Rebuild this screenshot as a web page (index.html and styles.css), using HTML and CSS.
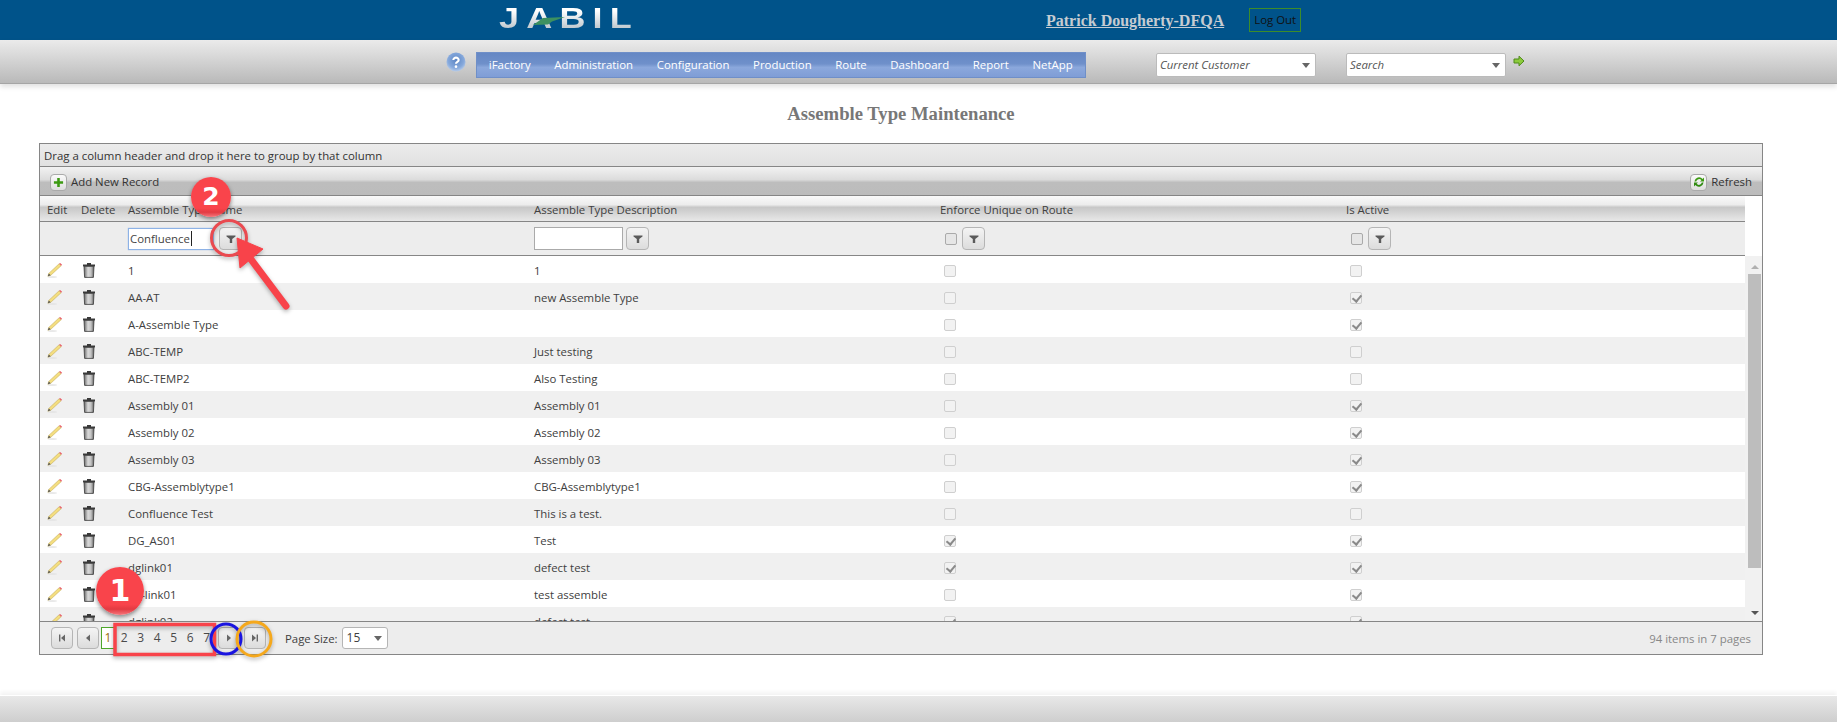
FILE: index.html
```html
<!DOCTYPE html>
<html lang="en">
<head>
    <meta charset="UTF-8">
    <title>Assemble Type Maintenance</title>
    <link rel="stylesheet" href="styles.css">
</head>
<body>
<svg class="icon-defs" width="0" height="0">
    <defs>
        <linearGradient id="canGrad" x1="0" x2="1" y1="0" y2="0">
            <stop offset="0" stop-color="#666"/>
            <stop offset="0.4" stop-color="#dadada"/>
            <stop offset="0.7" stop-color="#c4c4c4"/>
            <stop offset="1" stop-color="#5e5e5e"/>
        </linearGradient>
        <radialGradient id="helpGrad" cx="0.5" cy="0.4" r="0.6">
            <stop offset="0" stop-color="#5d86c4"/>
            <stop offset="0.7" stop-color="#86a9dc"/>
            <stop offset="1" stop-color="#b9cde9"/>
        </radialGradient>
        <symbol id="pencil" viewBox="0 0 18 18">
            <ellipse cx="6" cy="16.8" rx="5.5" ry="0.9" fill="#e2e2e2"/>
            <path d="M1 16 L2 12.8 L13.6 2 L15.9 4.2 L4.2 15 Z" fill="#f4de80" stroke="#b79a3a" stroke-width="0.5"/>
            <path d="M13.6 2 L14.8 1 L17 3.1 L15.9 4.2 Z" fill="#e8606a"/>
            <path d="M1 16 L2 12.8 L4.2 15 Z" fill="#555"/>
        </symbol>
        <symbol id="trash" viewBox="0 0 14 16">
            <path d="M1 2.6 H13 V4.4 H1 Z M5 1 H9 V2.6 H5 Z" fill="#3a3a3a"/>
            <path d="M2 4.4 H12 L11.4 15.4 H2.6 Z" fill="url(#canGrad)" stroke="#3a3a3a" stroke-width="0.8"/>
        </symbol>
        <symbol id="funnel" viewBox="0 0 10 10">
            <path d="M0.5 1.5 H9.5 V2.6 L6.2 5 V9 H3.8 V5 L0.5 2.6 Z" fill="#5a5a5a"/>
        </symbol>
    </defs>
</svg>

<header class="top-bar">
    <div class="logo">
        <span class="logo-text">JABIL</span>
        <svg class="logo-swoosh" width="80" height="40" viewBox="0 0 80 40">
            <path d="M34 25 L44 18 L66 17 L53 21.5 L49 24.5 Z" fill="#3c9060"/>
        </svg>
    </div>
    <div class="user-box">
        <a class="user-name" href="#">Patrick Dougherty-DFQA</a>
        <a class="logout" href="#">Log Out</a>
    </div>
</header>

<nav class="nav-bar">
    <svg class="help-icon" viewBox="0 0 18 18" width="20" height="20">
        <circle cx="9" cy="9" r="8.6" fill="url(#helpGrad)"/>
        <path d="M6.6 7.2 C6.6 4.4 11.4 4.4 11.4 7.2 C11.4 9 9 8.8 9 10.6" fill="none" stroke="#fff" stroke-width="1.9"/>
        <circle cx="9" cy="13.2" r="1.2" fill="#fff"/>
    </svg>
    <ul class="main-menu">
        <li>iFactory</li>
        <li>Administration</li>
        <li>Configuration</li>
        <li>Production</li>
        <li>Route</li>
        <li>Dashboard</li>
        <li>Report</li>
        <li>NetApp</li>
    </ul>
    <div class="combo combo-customer"><span>Current Customer</span><i class="combo-arrow"></i></div>
    <div class="combo combo-search"><span>Search</span><i class="combo-arrow"></i></div>
    <svg class="go-icon" viewBox="0 0 12 12" width="12" height="12">
        <path d="M1 4 H6 V1.2 L11 6 L6 10.8 V8 H1 Z" fill="#8ccb3c" stroke="#4f8a1a" stroke-width="1"/>
    </svg>
</nav>

<h1 class="page-title">Assemble Type Maintenance</h1>

<section class="grid">
    <div class="group-bar">Drag a column header and drop it here to group by that column</div>
    <div class="tool-bar">
        <a class="tool-link" href="#">
            <span class="tool-btn">
                <svg viewBox="0 0 12 12" width="11" height="11"><path d="M4.6 1 H7.4 V4.6 H11 V7.4 H7.4 V11 H4.6 V7.4 H1 V4.6 H4.6 Z" fill="#3c9a12"/></svg>
            </span>
            Add New Record
        </a>
        <a class="tool-link" href="#">
            <span class="tool-btn">
                <svg viewBox="0 0 12 12" width="12" height="12">
                    <path d="M1.4 5.4 A4.7 4.7 0 0 1 9.6 3 L11 1.6 V5.6 H7 L8.4 4.2 A3 3 0 0 0 3.2 5.4 Z" fill="#3c9a12"/>
                    <path d="M10.6 6.6 A4.7 4.7 0 0 1 2.4 9 L1 10.4 V6.4 H5 L3.6 7.8 A3 3 0 0 0 8.8 6.6 Z" fill="#2f8a10"/>
                </svg>
            </span>
            Refresh
        </a>
    </div>

    <div class="grid-head">
        <div class="grid-cols head-row">
            <div>Edit</div>
            <div>Delete</div>
            <div>Assemble Type Name</div>
            <div>Assemble Type Description</div>
            <div>Enforce Unique on Route</div>
            <div>Is Active</div>
        </div>
        <div class="grid-cols filter-row">
            <div></div>
            <div></div>
            <div class="filter-cell">
                <div class="filter-input focused">Confluence<i class="caret"></i></div>
                <span class="filter-btn"><svg width="10" height="10"><use href="#funnel"/></svg></span>
            </div>
            <div class="filter-cell">
                <input class="filter-input wide" type="text">
                <span class="filter-btn"><svg width="10" height="10"><use href="#funnel"/></svg></span>
            </div>
            <div class="filter-cell">
                <input class="chk filter-chk" type="checkbox">
                <span class="filter-btn"><svg width="10" height="10"><use href="#funnel"/></svg></span>
            </div>
            <div class="filter-cell">
                <input class="chk filter-chk" type="checkbox">
                <span class="filter-btn"><svg width="10" height="10"><use href="#funnel"/></svg></span>
            </div>
        </div>
    </div>

    <div class="grid-body">
        <div class="rows" id="rows"></div>
        <div class="scroll-bar">
            <i class="scroll-up"></i>
            <div class="scroll-thumb"></div>
            <i class="scroll-down"></i>
        </div>
    </div>

    <div class="pager">
        <span class="page-btn"><svg width="10" height="10" viewBox="0 0 10 10"><path d="M2 1.5 H3.4 V8.5 H2 Z M8 1.5 V8.5 L4 5 Z" fill="#666"/></svg></span>
        <span class="page-btn"><svg width="10" height="10" viewBox="0 0 10 10"><path d="M7 1.5 V8.5 L3 5 Z" fill="#666"/></svg></span>
        <div class="page-nums">
            <span class="page-num current">1</span>
            <span class="page-num">2</span>
            <span class="page-num">3</span>
            <span class="page-num">4</span>
            <span class="page-num">5</span>
            <span class="page-num">6</span>
            <span class="page-num">7</span>
        </div>
        <span class="page-btn"><svg width="10" height="10" viewBox="0 0 10 10"><path d="M3 1.5 V8.5 L7 5 Z" fill="#666"/></svg></span>
        <span class="page-btn"><svg width="10" height="10" viewBox="0 0 10 10"><path d="M2 1.5 V8.5 L6 5 Z M6.6 1.5 H8 V8.5 H6.6 Z" fill="#666"/></svg></span>
        <span class="page-size-label">Page Size:</span>
        <div class="page-size"><span>15</span><i class="combo-arrow"></i></div>
        <span class="page-info">94 items in 7 pages</span>
    </div>
</section>

<footer class="foot-bar"></footer>

<!-- callouts drawn over the screenshot -->
<svg class="callouts" width="1837" height="722" viewBox="0 0 1837 722">
    <path d="M115 624.5 H214.5 V654.5 H115 Z" fill="none" stroke="#f8434a" stroke-width="3.5"/>
    <circle cx="226" cy="639" r="15" fill="none" stroke="#1a14e0" stroke-width="3"/>
    <circle cx="254" cy="639" r="17" fill="none" stroke="#f5a81c" stroke-width="3"/>
    <circle cx="229" cy="238" r="17.5" fill="none" stroke="#ea4a50" stroke-width="3"/>
    <path d="M286 306 L250 258" stroke="#f8434a" stroke-width="7" stroke-linecap="round"/>
    <path d="M237 238 L263 249 L240 268 Z" fill="#f8434a" stroke="#f8434a" stroke-linejoin="round"/>
</svg>
<div class="badge badge-two">2</div>
<div class="badge badge-one">1</div>

<script>
    // name, description, unique on route, active
    const data = [
        ['1', '1', 0, 0],
        ['AA-AT', 'new Assemble Type', 0, 1],
        ['A-Assemble Type', '', 0, 1],
        ['ABC-TEMP', 'Just testing', 0, 0],
        ['ABC-TEMP2', 'Also Testing', 0, 0],
        ['Assembly 01', 'Assembly 01', 0, 1],
        ['Assembly 02', 'Assembly 02', 0, 1],
        ['Assembly 03', 'Assembly 03', 0, 1],
        ['CBG-Assemblytype1', 'CBG-Assemblytype1', 0, 1],
        ['Confluence Test', 'This is a test.', 0, 0],
        ['DG_AS01', 'Test', 1, 1],
        ['dglink01', 'defect test', 1, 1],
        ['dg-link01', 'test assemble', 0, 1],
        ['dglink02', 'defect test', 1, 1]
    ];

    function checkBox(on) {
        return `<input class="chk" type="checkbox" disabled${on ? ' checked' : ''}>`;
    }

    document.getElementById('rows').innerHTML = data.map(row => `
        <div class="grid-cols row">
            <div><svg class="pencil" width="16" height="16"><use href="#pencil"/></svg></div>
            <div><svg class="trash" width="14" height="16"><use href="#trash"/></svg></div>
            <div class="cell-text">${row[0]}</div>
            <div class="cell-text">${row[1]}</div>
            <div>${checkBox(row[2])}</div>
            <div>${checkBox(row[3])}</div>
        </div>`).join('');
</script>
</body>
</html>
```

FILE: styles.css
```css
* {
    box-sizing: border-box;
}
html, body {
    margin: 0;
    padding: 0;
}
body {
    position: relative;
    width: 1837px;
    height: 722px;
    overflow: hidden;
    background: #fff;
    font-family: "Open Sans", "Liberation Sans", sans-serif;
    font-size: 11.4px;
    color: #404040;
}
.icon-defs {
    position: absolute;
}

/* top blue band */
.top-bar {
    height: 40px;
    background: #00538a;
    display: flex;
    align-items: center;
}
.logo {
    position: relative;
    margin-left: 499px;
    width: 136px;
    height: 40px;
}
.logo-text {
    display: block;
    font-family: "Liberation Sans", sans-serif;
    font-weight: bold;
    font-size: 30px;
    line-height: 36px;
    letter-spacing: 6px;
    transform: scaleX(1.2);
    transform-origin: left;
    background: linear-gradient(#ffffff 30%, #c4ccd2 75%);
    -webkit-background-clip: text;
    background-clip: text;
    color: transparent;
}
.logo-swoosh {
    position: absolute;
    left: 0;
    top: 0;
}
.user-box {
    margin-left: 411px;
    display: flex;
    align-items: center;
}
.user-name {
    margin-top: 2px;
    font-family: "Liberation Serif", serif;
    font-weight: bold;
    font-size: 16px;
    color: #c6ccd2;
}
.logout {
    margin-left: 25px;
    width: 52px;
    height: 24px;
    border: 1px solid #3d8c2a;
    color: #111;
    font-size: 11.4px;
    line-height: 22px;
    text-align: center;
    text-decoration: none;
}

/* grey nav band */
.nav-bar {
    height: 44px;
    background: linear-gradient(#ebebeb, #b9b9b9);
    border-bottom: 1px solid #a5a5a5;
    box-shadow: 0 3px 5px rgba(0, 0, 0, 0.12);
    display: flex;
    align-items: flex-start;
    padding-left: 446px;
}
.help-icon {
    margin-top: 12px;
}
.main-menu {
    list-style: none;
    margin: 12px 0 0 10px;
    padding: 0;
    height: 26px;
    width: 610px;
    display: flex;
    border: 1px solid #6f8fc8;
    background: linear-gradient(#6587c4, #6f90ca 45%, #8ba8dc 60%, #7f9dd6);
    color: #fff;
}
.main-menu li {
    padding: 0 11.85px;
    line-height: 24px;
    font-size: 11.4px;
    white-space: nowrap;
}
.combo {
    position: relative;
    margin-top: 13px;
    width: 160px;
    height: 24px;
    background: #fff;
    border: 1px solid #bbb;
    border-radius: 2px;
    font-style: italic;
    color: #555;
    line-height: 22px;
    padding-left: 3px;
}
.combo-customer {
    margin-left: 70px;
}
.combo-search {
    margin-left: 30px;
}
.combo-arrow {
    position: absolute;
    right: 5px;
    top: 9px;
    border: 4px solid transparent;
    border-top: 5px solid #666;
    border-bottom: 0;
}
.go-icon {
    margin: 15px 0 0 7px;
}

.page-title {
    margin: 20px 0 0;
    height: 39px;
    padding-right: 35px;
    text-align: center;
    font-family: "Liberation Serif", serif;
    font-size: 18.67px;
    line-height: 20px;
    color: #777;
}

/* grid */
.grid {
    margin: 0 74px 0 39px;
    height: 512px;
    border: 1px solid #868686;
    display: flex;
    flex-direction: column;
}
.group-bar {
    height: 23px;
    padding-left: 4px;
    line-height: 24px;
    color: #333;
    background: linear-gradient(#ececec, #e1e1e1);
    border-bottom: 1px solid #868686;
}
.tool-bar {
    height: 29px;
    padding: 0 10px;
    display: flex;
    justify-content: space-between;
    align-items: center;
    background: linear-gradient(#f2f2f2, #dcdcdc 45%, #bdbdbd 55%, #bcbcbc);
    border-bottom: 1px solid #868686;
    flex: none;
}
.tool-link {
    display: flex;
    align-items: center;
    gap: 4px;
    color: #333;
    text-decoration: none;
    line-height: 18px;
    padding-top: 2px;
}
.tool-btn {
    width: 17px;
    height: 17px;
    display: flex;
    align-items: center;
    justify-content: center;
    border: 1px solid #aaa;
    border-radius: 4px;
    background: linear-gradient(#fafafa, #dedede);
}
.grid-head {
    width: 1705px;
    flex: none;
}
.grid-cols {
    display: grid;
    grid-template-columns: 34px 47px 406px 406px 406px 406px;
}
.grid-cols > div {
    padding-left: 7px;
}
.head-row {
    height: 26px;
    line-height: 28px;
    background: linear-gradient(#fafafa, #ececec 35%, #c7c7c7 45%, #e8e8e8);
    border-bottom: 1px solid #868686;
}
.filter-row {
    height: 34px;
    background: #ededed;
    border-bottom: 1px solid #868686;
}
.filter-cell {
    display: flex;
    align-items: center;
    gap: 5px;
}
.filter-input {
    width: 86px;
    height: 22px;
    padding: 0 1px;
    border: 1px solid #aaa;
    background: #fff;
    font: inherit;
    line-height: 20px;
    color: #444;
    outline: none;
}
.filter-input.wide {
    width: 89px;
    height: 23px;
    margin-right: -2px;
}
.focused {
    border: 1px solid #8db2e6;
    box-shadow: 0 0 1px #8db2e6;
}
.caret {
    display: inline-block;
    width: 1px;
    height: 15px;
    margin-left: 1px;
    vertical-align: -3px;
    background: #222;
}
.filter-btn, .page-btn {
    width: 22px;
    height: 22px;
    display: inline-flex;
    align-items: center;
    justify-content: center;
    border: 1px solid #b5b5b5;
    border-radius: 4px;
    background: linear-gradient(#f4f4f4, #dcdcdc);
}
.filter-row .filter-btn {
    width: 23px;
    height: 23px;
}
.chk {
    appearance: none;
    position: relative;
    width: 12px;
    height: 12px;
    margin: 0 0 0 4px;
    border: 1px solid #cfcfcf;
    border-radius: 2px;
    background: #f2f2f2;
    vertical-align: middle;
}
.chk:checked::after {
    content: "";
    position: absolute;
    left: 3px;
    top: 0;
    width: 4px;
    height: 7px;
    border: solid #8a8a8a;
    border-width: 0 2px 2px 0;
    transform: rotate(40deg);
}
.filter-chk {
    margin-left: 5px;
    border-color: #aaa;
    background: #e6e6e6;
}

.grid-body {
    flex: 1;
    min-height: 0;
    display: flex;
    overflow: hidden;
}
.rows {
    width: 1705px;
    flex: none;
}
.row {
    height: 27px;
    align-items: start;
    background: #fff;
}
.row:nth-child(even) {
    background: #f0f0f0;
}
.row > div {
    line-height: 27px;
}
.row > .cell-text {
    padding-top: 1px;
}
.row svg {
    display: block;
    margin-top: 6px;
}
.trash {
    margin-left: 1px;
}
.scroll-bar {
    flex: 1;
    display: flex;
    flex-direction: column;
    align-items: center;
    padding: 0 1px 0 3px;
    background: #f1f1f1;
    position: relative;
}
.scroll-up {
    margin: 9px 0 5px;
    border: 4px solid transparent;
    border-bottom: 4px solid #b0b0b0;
    border-top: 0;
}
.scroll-thumb {
    width: 100%;
    height: 294px;
    background: #bdbdbd;
}
.scroll-down {
    position: absolute;
    bottom: 6px;
    border: 4px solid transparent;
    border-top: 4px solid #555;
    border-bottom: 0;
}

.pager {
    height: 33px;
    flex: none;
    display: flex;
    align-items: center;
    padding: 0 11px;
    background: #ededed;
    border-top: 1px solid #868686;
    gap: 4px;
}
.page-nums {
    display: flex;
    margin: 0 -1px 0 -2px;
}
.page-num {
    width: 16.5px;
    height: 22px;
    line-height: 22px;
    text-align: center;
    color: #4a4a4a;
    font-size: 12px;
}
.page-num.current {
    border: 1px solid #4ea72a;
    width: 14px;
    margin-right: 1px;
    line-height: 20px;
    color: #9a6a10;
    background: #fff;
}
.page-size-label {
    margin-left: 15px;
}
.page-size {
    position: relative;
    width: 46px;
    height: 22px;
    padding-left: 4px;
    line-height: 20px;
    font-size: 12px;
    background: #fff;
    border: 1px solid #b5b5b5;
    border-radius: 3px;
}
.page-size .combo-arrow {
    top: 8px;
}
.page-info {
    margin-left: auto;
    color: #888;
}

.foot-bar {
    margin-top: 40px;
    height: 28px;
    background: linear-gradient(#e8e8e8, #cdcdcd);
    border-top: 1px solid #fff;
    box-shadow: 0 -3px 4px rgba(0, 0, 0, 0.05);
}

/* numbered callouts */
.callouts {
    position: absolute;
    left: 0;
    top: 0;
    pointer-events: none;
    filter: drop-shadow(0 2px 2px rgba(0, 0, 0, 0.3));
}
.badge {
    position: absolute;
    border-radius: 50%;
    background: linear-gradient(#f9444b, #f9444b 78%, #e23b42 88%, #f6777c);
    box-shadow: 0 2px 4px rgba(0, 0, 0, 0.45);
    color: #fff;
    font-family: "DejaVu Sans", sans-serif;
    font-weight: bold;
    text-align: center;
}
.badge-two {
    left: 191px;
    top: 177px;
    width: 40px;
    height: 40px;
    font-size: 25px;
    line-height: 40px;
}
.badge-one {
    left: 96px;
    top: 567px;
    width: 48px;
    height: 48px;
    font-size: 30px;
    line-height: 48px;
}
```
